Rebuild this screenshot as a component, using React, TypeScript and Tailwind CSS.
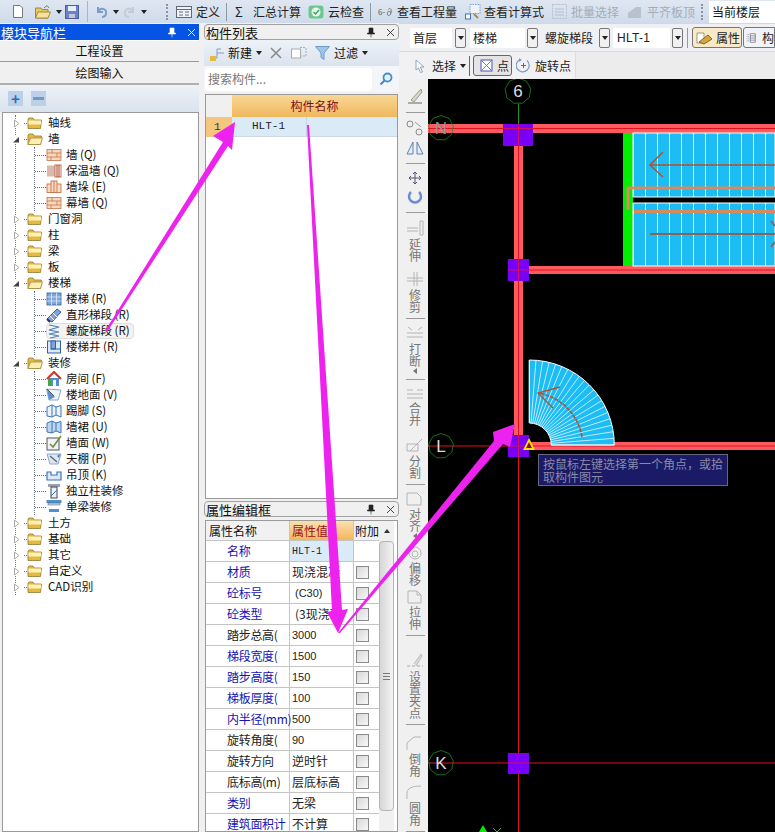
import type { ReactNode } from "react"

const font = { fontFamily: '"Noto Sans CJK SC", "Liberation Sans", sans-serif' }

function Folder({ open }: { open?: boolean }) {
  return (
    <svg width="16" height="14" viewBox="0 0 16 14" className="shrink-0">
      <path d="M1 3 L1 12.5 L13.5 12.5 L14.5 4 L7 4 L6 2 L2 2 Z" fill="#e8b93c" stroke="#8f7a3c" strokeWidth="0.8" />
      {open ? (
        <path d="M1 12.5 L3.5 6 L15.5 6 L13.5 12.5 Z" fill="#fbeeb0" stroke="#a08a40" strokeWidth="0.8" />
      ) : (
        <rect x="1.5" y="4.5" width="12.5" height="4" fill="#fff2b8" />
      )}
    </svg>
  )
}

function Expander({ open }: { open?: boolean }) {
  return (
    <svg width="9" height="9" viewBox="0 0 9 9" className="shrink-0 -ml-[4px] mr-[3px] bg-white">
      {open ? <path d="M1 7.5 L7 7.5 L7 2 Z" fill="#444" /> : <path d="M2.5 1 L7 4.5 L2.5 8 Z" fill="#fff" stroke="#aaa" />}
    </svg>
  )
}

function TreeIcon({ kind }: { kind: string }) {
  const blue = "#3f74b8"
  const brick = "#c9714a"
  return (
    <svg width="16" height="16" viewBox="0 0 16 16" className="shrink-0 relative z-10">
      {kind === "wall" && (
        <g fill="#f5d9bd" stroke={brick} strokeWidth="0.8">
          <rect x="1" y="2.5" width="14" height="11" />
          <path d="M1 6 H15 M1 10 H15 M6 2.5 V6 M11 6 V10 M5 10 V13.5" fill="none" />
        </g>
      )}
      {kind === "insul" && (
        <g>
          <rect x="1" y="2.5" width="8" height="11" fill="#d9b9ad" />
          <rect x="9" y="2" width="6" height="12" fill="#fff" stroke={brick} />
          <path d="M11 2 V14 M13 2 V14" stroke="#a33c20" />
        </g>
      )}
      {kind === "pier" && (
        <g fill="#f7dcc0" stroke={brick} strokeWidth="0.9">
          <rect x="1" y="5" width="14" height="8.5" />
          <rect x="5" y="2" width="6" height="11.5" />
          <path d="M8 2 V13" />
        </g>
      )}
      {kind === "stair" && (
        <g fill="#7ea6dc" stroke="#33609f" strokeWidth="0.8">
          <rect x="1" y="2" width="14" height="12" />
          <path d="M1 6 H15 M1 10 H15 M5.5 2 V14 M10.5 2 V14" fill="none" stroke="#dfeaf7" />
        </g>
      )}
      {kind === "straight" && (
        <g>
          <path d="M1 12 L11 2 L15 5 L6 15 Z" fill="#7ea6dc" stroke="#33609f" />
          <path d="M4 9 L8 13 M7 6 L11 10" stroke="#fff" />
          <path d="M1 12 L4 15" stroke="#334" strokeWidth="2" />
        </g>
      )}
      {kind === "spiral" && <path d="M3 2 L13 4 L3 7 L13 9 L3 11 L13 13 L4 15" fill="none" stroke="#4c7fbe" strokeWidth="1.2" />}
      {kind === "well" && (
        <g fill="#dbe8f7" stroke="#33609f">
          <rect x="1.5" y="2" width="13" height="12" />
          <rect x="5" y="2" width="4.5" height="8" fill="#7ea6dc" />
          <path d="M5 10 H14" />
        </g>
      )}
      {kind === "house" && (
        <g>
          <rect x="3" y="7" width="10" height="8" fill="#4d8fd0" />
          <path d="M1 8 L8 1 L15 8" fill="none" stroke="#d13a2a" strokeWidth="2.2" />
          <rect x="2" y="8" width="3" height="7" fill="#3fa648" />
          <rect x="7" y="9" width="3" height="6" fill="#fff" />
        </g>
      )}
      {kind === "floor" && (
        <g>
          <path d="M0.5 2 L15 3 L12 13 L3 13 Z" fill="#eef3fa" stroke="#8ba6c9" />
          <path d="M1 2 L9 10 L3 13 Z" fill="#5d8fd0" />
          <path d="M1 2 L8 9" stroke="#555" />
        </g>
      )}
      {(kind === "skirt" || kind === "dado") && (
        <g>
          <path d="M1 4 L6 2 L10 4 L15 2.5 V14 L10 12 L6 14 L1 13 Z" fill={kind === "dado" ? "#bcd6f2" : "#eaf2fb"} stroke={blue} />
          <path d="M6 2 V14 M10 4 V12" stroke={blue} />
        </g>
      )}
      {kind === "face" && (
        <g>
          <rect x="1" y="3" width="12" height="12" fill="#eef3fa" stroke="#555" />
          <path d="M4 9 L7 12 L15 1" fill="none" stroke="#7a8a3a" strokeWidth="1.6" />
        </g>
      )}
      {kind === "ceil" && (
        <g>
          <path d="M1 3 L15 3 L12 13 L4 13 Z" fill="#dbe8f7" stroke="#8ba6c9" />
          <path d="M4 5 L11 11" stroke="#666" strokeWidth="1.4" />
          <path d="M11 5 L14 3 L13 7 Z" fill="#3f74b8" />
        </g>
      )}
      {kind === "hang" && <path d="M1 5 H5 V8 H11 V5 H15 V13 H1 Z" fill="#dbe8f7" stroke={blue} strokeWidth="1.2" />}
      {kind === "col" && (
        <g>
          <rect x="2" y="1" width="12" height="3" fill="#9aa3ad" />
          <rect x="5" y="4" width="6" height="11" fill="#e8f0f8" stroke="#445" />
          <path d="M5 13 L11 7" stroke={blue} />
        </g>
      )}
      {kind === "beam" && (
        <g>
          <rect x="0.5" y="1" width="15" height="3" fill="#4d8fd0" />
          <rect x="2" y="4" width="12" height="2" fill="#bcd6f2" stroke="#555" strokeWidth="0.5" />
          <rect x="3" y="10" width="10" height="3" fill="#4d8fd0" />
        </g>
      )}
    </svg>
  )
}

function Root({ label, open, children }: { label: string; open?: boolean; children?: ReactNode }) {
  return (
    <div>
      <div className="flex h-4 items-center">
        <Expander open={open} />
        <span className="w-[3px] border-b border-dotted border-gray-500" />
        <Folder open={open} />
        <span className="ml-[5px] whitespace-nowrap">{label}</span>
      </div>
      {children && <div className="ml-[18px] border-l border-dotted border-gray-500">{children}</div>}
    </div>
  )
}

function Child({ label, kind, active }: { label: string; kind: string; active?: boolean }) {
  return (
    <div className="flex h-4 items-center">
      <span className="w-[11px] border-b border-dotted border-gray-500" />
      <TreeIcon kind={kind} />
      <span
        className={
          active
            ? "-ml-[16px] pl-[19px] pr-[3px] h-4 flex items-center whitespace-nowrap bg-[#f3f3f3] border border-[#dddddd] rounded-sm"
            : "ml-[4px] whitespace-nowrap"
        }
      >
        {label}
      </span>
    </div>
  )
}

function Tree() {
  return (
    <div className="h-full bg-white border border-[#9a9a9a] pt-[2px] pl-[12px] text-[11.5px] text-[#111]">
      <div className="border-l border-dotted border-gray-500 w-[170px]">
        <Root label="轴线" />
        <Root label="墙" open>
          <Child label="墙 (Q)" kind="wall" />
          <Child label="保温墙 (Q)" kind="insul" />
          <Child label="墙垛 (E)" kind="pier" />
          <Child label="幕墙 (Q)" kind="wall" />
        </Root>
        <Root label="门窗洞" />
        <Root label="柱" />
        <Root label="梁" />
        <Root label="板" />
        <Root label="楼梯" open>
          <Child label="楼梯 (R)" kind="stair" />
          <Child label="直形梯段 (R)" kind="straight" />
          <Child label="螺旋梯段 (R)" kind="spiral" active />
          <Child label="楼梯井 (R)" kind="well" />
        </Root>
        <Root label="装修" open>
          <Child label="房间 (F)" kind="house" />
          <Child label="楼地面 (V)" kind="floor" />
          <Child label="踢脚 (S)" kind="skirt" />
          <Child label="墙裙 (U)" kind="dado" />
          <Child label="墙面 (W)" kind="face" />
          <Child label="天棚 (P)" kind="ceil" />
          <Child label="吊顶 (K)" kind="hang" />
          <Child label="独立柱装修" kind="col" />
          <Child label="单梁装修" kind="beam" />
        </Root>
        <Root label="土方" />
        <Root label="基础" />
        <Root label="其它" />
        <Root label="自定义" />
        <Root label="CAD识别" />
      </div>
    </div>
  )
}

function PaneHeader({ title, active }: { title: string; active?: boolean }) {
  return (
    <div
      className={
        active
          ? "h-[16px] flex items-center pl-[1px] pr-[3px] text-[13px] text-white bg-[#0554e3]"
          : "h-[16px] flex items-center pl-[1px] pr-[3px] text-[13px] text-[#111] bg-[#f0f0f0] border border-[#a0a0a0] rounded-sm"
      }
    >
      <span className="flex-1 whitespace-nowrap leading-none">{title}</span>
      <svg width="10" height="11" viewBox="0 0 10 11" className="mr-[10px]">
        <path d="M3 1 H7 V6 H8.5 V7 H1.5 V6 H3 Z M5 7 V10.5" fill={active ? "#fff" : "#222"} stroke={active ? "#fff" : "#222"} strokeWidth="0.6" />
      </svg>
      <svg width="9" height="9" viewBox="0 0 9 9">
        <path d="M1 1 L8 8 M8 1 L1 8" stroke={active ? "#fff" : "#333"} strokeWidth="0.9" />
      </svg>
    </div>
  )
}

const Caret = () => <span className="block border-x-[3px] border-t-[4px] border-x-transparent border-t-[#222]" />

function DropBtn() {
  return (
    <span className="w-[11px] h-[20px] shrink-0 flex items-center justify-center bg-[#f0f0f0] border border-[#777] rounded-[2px]">
      <Caret />
    </span>
  )
}

function TopBar() {
  return (
    <div className="h-[23px] shrink-0 flex items-center bg-gradient-to-b from-[#dfe7f2] to-[#cfdbea] text-[12px] text-[#222] whitespace-nowrap overflow-hidden">
      <svg width="10" height="13" viewBox="0 0 10 13" className="ml-[13px] shrink-0">
        <path d="M0.5 0.5 H7 L9.5 3 V12.5 H0.5 Z" fill="#fff" stroke="#777" />
      </svg>
      <svg width="16" height="14" viewBox="0 0 16 14" className="ml-[12px] shrink-0">
        <path d="M0.5 3 H6 L7 4.5 H13 V13 H0.5 Z" fill="#e7c664" stroke="#a08a40" />
        <path d="M0.5 13 L3 7 H15.5 L13 13 Z" fill="#f6e39a" stroke="#a08a40" />
        <path d="M9 3 L12 0.5 L14 3" fill="none" stroke="#4f9a3c" />
      </svg>
      <span className="ml-[5px]"><Caret /></span>
      <svg width="14" height="14" viewBox="0 0 14 14" className="ml-[3px] shrink-0">
        <rect x="0.5" y="0.5" width="13" height="13" fill="#6b82c4" stroke="#4a5f9f" />
        <rect x="3" y="1" width="8" height="5" fill="#e8eef8" />
        <rect x="4" y="9" width="6" height="4" fill="#c6c6d8" />
      </svg>
      <span className="ml-[8px] w-px h-[21px] bg-[#aab4c4]" />
      <svg width="12" height="12" viewBox="0 0 12 12" className="ml-[8px] shrink-0">
        <path d="M2 1 V6 H7 M2 6 C4 1 11 2 10 8 C9.5 10 8 11 6 11" fill="none" stroke="#7f9cc9" strokeWidth="2" />
      </svg>
      <span className="ml-[5px]"><Caret /></span>
      <svg width="12" height="12" viewBox="0 0 12 12" className="ml-[4px] shrink-0">
        <path d="M10 1 V6 H5 M10 6 C8 1 1 2 2 8 C2.5 10 4 11 6 11" fill="none" stroke="#c4cbd6" strokeWidth="2" />
      </svg>
      <span className="ml-[6px]"><Caret /></span>
      <span className="ml-[19px] w-[2px] h-[16px] border-l-2 border-dotted border-[#8a94a4]" />
      <svg width="16" height="12" viewBox="0 0 16 12" className="ml-[8px] shrink-0">
        <rect x="0.5" y="0.5" width="15" height="11" fill="#eef3fa" stroke="#667" />
        <path d="M0.5 3.5 H15.5 M3 6 H7 M3 9 H7 M9 6 H13 M9 9 H13" stroke="#667" />
      </svg>
      <span className="ml-[4px]">定义</span>
      <span className="ml-[6px] w-px h-[18px] bg-[#8f98a6]" />
      <span className="ml-[8px] w-[8px] text-[13px]">Σ</span>
      <span className="ml-[10px]">汇总计算</span>
      <svg width="16" height="14" viewBox="0 0 16 14" className="ml-[7px] shrink-0">
        <rect x="0.5" y="0.5" width="15" height="13" rx="3" fill="#6cc98c" />
        <circle cx="8" cy="7" r="4.5" fill="#e9f6ee" />
        <path d="M5.5 7 L7.5 9 L11 5" fill="none" stroke="#3d9a62" strokeWidth="1.3" />
      </svg>
      <span className="ml-[4px]">云检查</span>
      <span className="ml-[6px] w-px h-[18px] bg-[#8f98a6]" />
      <span className="ml-[7px] w-[16px] text-[8px] text-[#555] overflow-hidden">6-∂</span>
      <span className="ml-[3px]">查看工程量</span>
      <svg width="16" height="16" viewBox="0 0 16 16" className="ml-[8px] shrink-0">
        <rect x="5" y="0.5" width="10" height="9" fill="#eef3fa" stroke="#7f9cc9" strokeDasharray="1.5 1" />
        <rect x="0.5" y="10" width="5" height="5" fill="#fff" stroke="#3f74b8" />
        <path d="M9 10 L13 14" stroke="#b08a3c" strokeWidth="2" />
      </svg>
      <span className="ml-[3px]">查看计算式</span>
      <svg width="15" height="15" viewBox="0 0 15 15" className="ml-[8px] shrink-0">
        <rect x="0.5" y="0.5" width="14" height="14" fill="none" stroke="#b6bfca" strokeDasharray="2 1" />
        <path d="M3 5 H12 M3 8 H12 M3 11 H12" stroke="#b6bfca" />
      </svg>
      <span className="ml-[4px] text-[#a4acb8]">批量选择</span>
      <svg width="15" height="14" viewBox="0 0 15 14" className="ml-[8px] shrink-0">
        <path d="M1 13 V8 L9 2 H14 V13 Z" fill="#b9c1cc" />
      </svg>
      <span className="ml-[5px] text-[#a4acb8]">平齐板顶</span>
      <span className="ml-[6px] w-[2px] h-[16px] border-l-2 border-dotted border-[#8a94a4]" />
      <span className="ml-[6px] h-[22px] flex-1 bg-white pl-[3px] flex items-center text-[#111]">当前楼层</span>
    </div>
  )
}

function ModulePane() {
  return (
    <div className="w-[199px] shrink-0 flex flex-col">
      <PaneHeader title="模块导航栏" active />
      <div className="h-[22px] flex items-center justify-center text-[12px] bg-[#f0f0f0] border-b border-[#9a9a9a] border-t border-t-white">工程设置</div>
      <div className="h-[23px] flex items-center justify-center text-[12px] bg-[#f0f0f0] border-b-2 border-[#b0b0b0]">绘图输入</div>
      <div className="h-[27px] flex items-center gap-[8px] pl-[8px] bg-gradient-to-b from-[#eef2f8] to-[#d9e2ee]">
        <span className="w-[15px] h-[15px] bg-[#bcd0e8] flex items-center justify-center text-[#2a6fb8] text-[15px] leading-none font-bold">+</span>
        <span className="w-[15px] h-[15px] bg-[#bcd0e8] flex items-center justify-center"><span className="w-[11px] h-[3px] bg-[#6d9ccb]" /></span>
      </div>
      <div className="flex-1 min-h-0 pl-[2px]">
        <Tree />
      </div>
    </div>
  )
}

function ComponentList() {
  return (
    <div className="h-[475px] shrink-0 flex flex-col bg-[#f0f0f0]">
      <PaneHeader title="构件列表" />
      <div className="h-[26px] flex items-center bg-gradient-to-b from-[#eef2f8] to-[#dbe3ee] text-[12px] pl-[5px]">
        <svg width="18" height="18" viewBox="0 0 18 18">
          <path d="M8 9 V5 H12 M8 9 H15 M8 9 V14 H3" fill="none" stroke="#7f9cc9" />
          <rect x="1" y="12" width="6" height="5" fill="#e8b93c" />
        </svg>
        <span className="ml-[1px]">新建</span>
        <span className="ml-[4px]"><Caret /></span>
        <svg width="12" height="12" viewBox="0 0 12 12" className="ml-[8px]">
          <path d="M1 1 L11 11 M11 1 L1 11" stroke="#8a8a8a" strokeWidth="1.6" />
        </svg>
        <svg width="16" height="12" viewBox="0 0 16 12" className="ml-[9px]">
          <rect x="0.5" y="2" width="9" height="9" fill="#fff" stroke="#aaa" />
          <path d="M9 0.5 H15 M15 1 V9 H9" fill="none" stroke="#aaa" strokeDasharray="2 1" />
        </svg>
        <svg width="15" height="14" viewBox="0 0 15 14" className="ml-[8px]">
          <path d="M0.5 0.5 H14.5 L9 7 V13.5 L6 11.5 V7 Z" fill="#9ec5ea" stroke="#6d9ccb" />
        </svg>
        <span className="ml-[4px]">过滤</span>
        <span className="ml-[4px]"><Caret /></span>
      </div>
      <div className="h-[26px] flex items-center bg-[#f3f5f8]">
        <span className="ml-[1px] w-[167px] h-[23px] flex items-center pl-[3px] bg-white text-[12px] text-[#777] rounded-sm">搜索构件...</span>
        <svg width="14" height="14" viewBox="0 0 14 14" className="ml-[7px]">
          <circle cx="8.5" cy="5.5" r="4" fill="#e6f2fb" stroke="#3d8fd0" strokeWidth="1.8" />
          <path d="M5.5 8.5 L1.5 12.5" stroke="#3d8fd0" strokeWidth="2.2" />
        </svg>
      </div>
      <div className="flex-1 min-h-0 mt-[2px] mx-[1px] bg-white border border-[#9a9a9a] text-[12px]">
        <div className="flex h-[22px]">
          <div className="w-[26px] bg-[#f0f0f0]" />
          <div className="flex-1 flex items-center justify-center text-[#7a1020] bg-gradient-to-b from-[#f9d795] to-[#f0b75c]">构件名称</div>
        </div>
        <div className="flex h-[20px]">
          <div className="w-[26px] bg-[#f5c77e] flex items-center pl-[8px] text-[#333] text-[11px]" style={{ fontFamily: '"Liberation Mono", monospace' }}>1</div>
          <div className="flex-1 flex bg-[#dbeaf7] border-b border-[#cfd8e2]">
            <span className="w-[75px] pl-[20px] border-r border-[#c7d5e3] flex items-center text-[11px] text-[#222]" style={{ fontFamily: '"Liberation Mono", monospace' }}>HLT-1</span>
          </div>
        </div>
      </div>
    </div>
  )
}

const props = [
  { name: "名称", value: "HLT-1", blue: true, check: false, cls: "pl-[2px] bg-[#dbeaf7] text-[10px] font-['Liberation_Mono']" },
  { name: "材质", value: "现浇混凝", blue: true, check: true, cls: "pl-[2px] text-[12px]" },
  { name: "砼标号", value: "(C30)", blue: true, check: true, cls: "pl-[5px] text-[11px] font-['Liberation_Sans']" },
  { name: "砼类型", value: "(3现浇砼", blue: true, check: true, cls: "pl-[5px] text-[12px]" },
  { name: "踏步总高(", value: "3000", blue: false, check: true, cls: "pl-[2px] text-[11px] font-['Liberation_Sans']" },
  { name: "梯段宽度(", value: "1500", blue: true, check: true, cls: "pl-[2px] text-[11px] font-['Liberation_Sans']" },
  { name: "踏步高度(", value: "150", blue: true, check: true, cls: "pl-[2px] text-[11px] font-['Liberation_Sans']" },
  { name: "梯板厚度(", value: "100", blue: true, check: true, cls: "pl-[2px] text-[11px] font-['Liberation_Sans']" },
  { name: "内半径(mm)", value: "500", blue: true, check: true, cls: "pl-[2px] text-[11px] font-['Liberation_Sans']" },
  { name: "旋转角度(", value: "90", blue: false, check: true, cls: "pl-[2px] text-[11px] font-['Liberation_Sans']" },
  { name: "旋转方向", value: "逆时针", blue: false, check: true, cls: "pl-[2px] text-[12px]" },
  { name: "底标高(m)", value: "层底标高", blue: false, check: true, cls: "pl-[2px] text-[12px]" },
  { name: "类别", value: "无梁", blue: true, check: true, cls: "pl-[2px] text-[12px]" },
  { name: "建筑面积计", value: "不计算", blue: true, check: true, cls: "pl-[2px] text-[12px]" },
]

function PropertyPane() {
  return (
    <div className="flex-1 min-h-0 flex flex-col bg-[#f0f0f0] mt-[2px]">
      <PaneHeader title="属性编辑框" />
      <div className="flex-1 min-h-0 mt-[3px] mx-[1px] flex bg-white border border-[#9a9a9a] text-[12px] overflow-hidden">
        <div className="flex-1 min-w-0">
          <div className="flex h-[20px] border-b border-[#c4c4c4] bg-[#f1f1f1]">
            <span className="w-[84px] pl-[3px] flex items-center border-r border-[#c4c4c4]">属性名称</span>
            <span className="w-[64px] pl-[2px] flex items-center text-[#9a1020] bg-gradient-to-b from-[#fbe0ae] to-[#f2b65a] border-r border-[#c4c4c4]">属性值</span>
            <span className="flex-1 flex items-center overflow-hidden whitespace-nowrap pl-[1px]">附加</span>
          </div>
          {props.map((p) => (
            <div key={p.name} className="flex h-[21px] border-b border-[#c4c4c4]">
              <span className={p.blue ? "w-[84px] pl-[21px] flex items-center border-r border-[#c4c4c4] text-[#1414b4] whitespace-nowrap tracking-[-0.3px]" : "w-[84px] pl-[21px] flex items-center border-r border-[#c4c4c4] text-[#222] whitespace-nowrap tracking-[-0.3px]"}>{p.name}</span>
              <span className={`w-[64px] flex items-center border-r border-[#c4c4c4] text-[#222] whitespace-nowrap overflow-hidden ${p.cls}`}>{p.value}</span>
              <span className="flex-1 flex items-center pl-[2px]">
                {p.check ? <span className="w-[13px] h-[13px] border border-[#8a8a8a] bg-gradient-to-br from-[#d8d8d8] to-[#f8f8f8]" /> : null}
              </span>
            </div>
          ))}
        </div>
        <div className="w-[15px] mr-[3px] shrink-0 flex flex-col items-center bg-[#f0f0f0]">
          <span className="h-[20px] flex items-center">
            <span className="border-x-[3px] border-b-[4px] border-x-transparent border-b-[#333]" />
          </span>
          <div className="flex-1 w-full bg-gradient-to-r from-[#d6d6d6] to-[#f4f4f4] border border-[#b4b4b4] rounded-sm flex items-center justify-center mb-[20px]">
            <span className="w-[7px] h-[7px] border-y border-[#777] flex items-center"><span className="w-full h-px bg-[#777]" /></span>
          </div>
        </div>
      </div>
    </div>
  )
}

function ToolRows() {
  return (
    <div className="shrink-0 text-[12px] text-[#222] whitespace-nowrap">
      <div className="h-[29px] flex items-center bg-[#eef0f4] border-b border-[#d8d8d8] pl-[11px] border-t border-t-[#d0d8e4]">
        <span className="w-[42px] h-[20px] pl-[3px] flex items-center bg-white">首层</span>
        <span className="ml-[3px]"><DropBtn /></span>
        <span className="ml-[4px] w-[55px] h-[20px] pl-[3px] flex items-center bg-white">楼梯</span>
        <span className="ml-[2px]"><DropBtn /></span>
        <span className="ml-[7px] w-[54px] flex items-center">螺旋梯段</span>
        <DropBtn />
        <span className="ml-[3px] w-[57px] h-[20px] pl-[4px] flex items-center bg-white text-[12px] tracking-wide" style={{ fontFamily: '"Liberation Sans", sans-serif' }}>HLT-1</span>
        <span className="ml-[2px]"><DropBtn /></span>
        <span className="ml-[4px] w-px h-[20px] bg-[#999]" />
        <span className="ml-[4px] w-[50px] h-[21px] flex items-center pl-[3px] gap-[3px] bg-[#f8e9c8] border border-[#777] rounded-[3px]">
          <svg width="17" height="14" viewBox="0 0 17 14">
            <path d="M1 2 H8 V12 H1 Z" fill="#fff" stroke="#997" />
            <path d="M3 11 L12 4 L16 8 L8 13 Z" fill="#d8a43c" stroke="#86642a" />
          </svg>
          属性
        </span>
        <span className="ml-[1px] flex-1 h-[21px] flex items-center pl-[2px] gap-[6px] bg-[#f0f3f8] border border-[#777] rounded-l-[3px] overflow-hidden">
          <svg width="14" height="14" viewBox="0 0 14 14">
            <path d="M6 1 H13 V13 H6 Z M6 4 H13 M6 7 H13 M6 10 H13" fill="#fff" stroke="#667" />
            <path d="M1 2 H4 M1 5 H4 M1 8 H4 M1 11 H4" stroke="#667" strokeDasharray="1 1" />
          </svg>
          构
        </span>
      </div>
      <div className="h-[27px] flex">
        <div className="w-[177px] flex items-center bg-[#f1f1f3] border-r border-[#dddddd] pl-[16px]">
          <svg width="10" height="14" viewBox="0 0 10 14">
            <path d="M1 1 L9 8 L5.5 8 L7.5 13 L5.5 13.5 L3.5 9 L1 11 Z" fill="#fff" stroke="#8ba6c9" />
          </svg>
          <span className="ml-[7px]">选择</span>
          <span className="ml-[4px]"><Caret /></span>
          <span className="ml-[3px] w-px h-[20px] bg-[#666]" />
          <span className="ml-[3px] w-[39px] h-[21px] pl-[6px] flex items-center gap-[4px] bg-[#e4e4e6] border border-[#666] rounded-[3px]">
            <svg width="13" height="13" viewBox="0 0 13 13">
              <rect x="1" y="1" width="11" height="11" fill="#fff" stroke="#4a55a8" />
              <path d="M1 1 L12 12 M12 1 L1 12" stroke="#d0559a" />
            </svg>
            点
          </span>
          <svg width="15" height="15" viewBox="0 0 15 15" className="ml-[4px]">
            <path d="M4 1.5 A6.5 6.5 0 1 0 11 2.5" fill="none" stroke="#7f9cc9" strokeWidth="1.3" />
            <path d="M7.5 5 V10 M5 7.5 H10" stroke="#666" />
            <path d="M3 0 L6 2 L3 4 Z" fill="#7f9cc9" />
          </svg>
          <span className="ml-[4px]">旋转点</span>
        </div>
        <div className="flex-1 bg-[#ececec]" />
      </div>
    </div>
  )
}

function V({ text }: { text: string }) {
  return <span className="w-[13px] text-[12px] leading-[12px] text-[#777] text-center shrink-0">{text}</span>
}

const Sep = () => <span className="w-[19px] h-px bg-[#999] my-[5px] shrink-0" />

function GhostIcon({ h = 15, children }: { h?: number; children: ReactNode }) {
  return (
    <svg width="18" height={h} viewBox={`0 0 18 ${h}`} className="shrink-0 my-[2px]">
      {children}
    </svg>
  )
}

function SideTools() {
  const line = { fill: "none", stroke: "#b4b4b4" }
  return (
    <div className="w-[26px] shrink-0 ml-[3px] flex flex-col items-center bg-[#f0f0f0] pt-[6px] overflow-hidden">
      <GhostIcon h={18}>
        <path d="M2 16 H16" stroke="#666" />
        <path d="M5 13 L15 2 L16 5 L8 15 Z" fill="#d8d8c0" stroke="#999" />
      </GhostIcon>
      <Sep />
      <GhostIcon h={16}>
        <circle cx="4" cy="4" r="3" {...line} stroke="#888" />
        <circle cx="13" cy="12" r="3" {...line} stroke="#888" />
        <path d="M9 2 L15 7" stroke="#999" />
      </GhostIcon>
      <GhostIcon h={16}>
        <path d="M7 2 V14 H1 Z M11 2 V14 H17 Z" fill="#e8edf5" stroke="#5f7fae" />
      </GhostIcon>
      <Sep />
      <GhostIcon h={14}>
        <path d="M9 1 V13 M3 7 H15 M9 1 L7 3 M9 1 L11 3 M9 13 L7 11 M9 13 L11 11 M3 7 L5 5 M3 7 L5 9 M15 7 L13 5 M15 7 L13 9" stroke="#557" fill="none" />
      </GhostIcon>
      <GhostIcon h={16}>
        <path d="M5 3 A6 6 0 1 0 13 3" fill="none" stroke="#6c8bd0" strokeWidth="2.5" />
      </GhostIcon>
      <Sep />
      <GhostIcon h={16}>
        <path d="M1 8 H12 M1 11 H12 M14 1 H17 V15 H14 Z" {...line} />
      </GhostIcon>
      <V text="延伸" />
      <span className="h-[7px] shrink-0" />
      <GhostIcon h={16}>
        <path d="M1 7 H17 M1 10 H17 M8 1 V15 M11 1 V15" {...line} />
      </GhostIcon>
      <V text="修剪" />
      <Sep />
      <GhostIcon h={13}>
        <path d="M2 1 L6 4 M16 1 L12 4 M1 7 H17 M1 11 H17" {...line} />
      </GhostIcon>
      <span className="h-[2px] shrink-0" />
      <V text="打断" />
      <span className="mt-[1px] border-y-[3px] border-r-[4px] border-y-transparent border-r-[#777]" />
      <Sep />
      <GhostIcon h={13}>
        <path d="M1 3 H7 M17 3 H11 M1 7 H17 M1 11 H17" {...line} />
      </GhostIcon>
      <V text="合并" />
      <span className="h-[9px] shrink-0" />
      <GhostIcon h={16}>
        <path d="M1 7 H12 V14 H1 Z M4 14 L16 2" {...line} />
      </GhostIcon>
      <V text="分割" />
      <Sep />
      <GhostIcon h={14}>
        <path d="M1 1 H11 L15 5 V13 H1 Z" {...line} />
      </GhostIcon>
      <V text="对齐" />
      <span className="mt-[1px] mb-[5px] border-y-[3px] border-r-[4px] border-y-transparent border-r-[#777]" />
      <GhostIcon h={14}>
        <circle cx="9" cy="7" r="6" {...line} />
        <circle cx="9" cy="8" r="3" {...line} />
      </GhostIcon>
      <V text="偏移" />
      <span className="h-[2px] shrink-0" />
      <GhostIcon h={14}>
        <path d="M2 1 H11 L15 5 V13 H2 Z M11 1 V5 H15" {...line} />
      </GhostIcon>
      <V text="拉伸" />
      <Sep />
      <span className="h-[9px] shrink-0" />
      <GhostIcon h={17}>
        <path d="M8 12 L15 2 L16 4 L10 14" fill="#ddd" stroke="#bbb" />
        <path d="M1 14 H17" stroke="#aaa" strokeDasharray="3 2" />
      </GhostIcon>
      <V text="设置夹点" />
      <Sep />
      <span className="h-[3px] shrink-0" />
      <GhostIcon h={16}>
        <path d="M1 15 V8 L8 2 H15" {...line} />
      </GhostIcon>
      <V text="倒角" />
      <span className="h-[5px] shrink-0" />
      <GhostIcon h={16}>
        <path d="M1 15 V9 C1 5 5 2 15 2" {...line} />
      </GhostIcon>
      <V text="圆角" />
      <Sep />
    </div>
  )
}

function AxisBubble({ x, y, label, r = 12.5, color = "#dddddd" }: { x: number; y: number; label: string; r?: number; color?: string }) {
  const pts = Array.from({ length: 9 }, (_, i) => {
    const a = (i * 2 * Math.PI) / 9 - Math.PI / 2
    return `${x + r * Math.cos(a)},${y + r * Math.sin(a)}`
  }).join(" ")
  return (
    <g>
      <polygon points={pts} fill="none" stroke="#1f8a1f" strokeWidth="0.8" />
      <text x={x} y={y + 6} fill={color} fontSize="17" textAnchor="middle" fontFamily="Liberation Sans, sans-serif">
        {label}
      </text>
    </g>
  )
}

function Fan() {
  const cx = 529.3
  const cy = 445
  const R = 85
  const r = 22
  const n = 20
  const lines = Array.from({ length: n + 1 }, (_, i) => {
    const a = (i / n) * (Math.PI / 2)
    return { x1: cx + r * Math.sin(a), y1: cy - r * Math.cos(a), x2: cx + R * Math.sin(a), y2: cy - R * Math.cos(a) }
  })
  return (
    <g>
      <path d={`M${cx} ${cy - R} A${R} ${R} 0 0 1 ${cx + R} ${cy} L${cx + r} ${cy} A${r} ${r} 0 0 0 ${cx} ${cy - r} Z`} fill="#1cbcf5" stroke="#fff" strokeWidth="1" />
      {lines.map((l, i) => (
        <line key={i} {...l} stroke="#e8f8ff" strokeWidth="0.8" />
      ))}
      <path d="M582 437 A53 53 0 0 0 538 393" fill="none" stroke="#b5502c" strokeWidth="1.6" strokeDasharray="4 1" />
      <path d="M560 387 L538 393 L553 408" fill="none" stroke="#b5502c" strokeWidth="1.3" />
    </g>
  )
}

function Canvas() {
  const treads = [633, 645, 657, 669, 681, 693, 705, 717, 729, 741, 753, 765]
  return (
    <svg viewBox="428 79 347 753" className="flex-1 min-w-0 h-full bg-black block">
      <rect x="428" y="124" width="347" height="9" fill="#ff5a60" />
      <rect x="514" y="133" width="9" height="302" fill="#ff5a60" />
      <rect x="529" y="266" width="246" height="8" fill="#ff5a60" />
      <rect x="529" y="442" width="246" height="8" fill="#ff5a60" />
      <line x1="428" y1="128.5" x2="775" y2="128.5" stroke="#e0101c" />
      <line x1="529" y1="270" x2="775" y2="270" stroke="#e0101c" />
      <line x1="428" y1="446" x2="775" y2="446" stroke="#e0101c" />
      <line x1="428" y1="763" x2="775" y2="763" stroke="#e0101c" />
      <line x1="518.5" y1="104" x2="518.5" y2="124" stroke="#1f9a1f" />
      <line x1="518.5" y1="124" x2="518.5" y2="832" stroke="#e0101c" />

      <rect x="623" y="133" width="10" height="133" fill="#00ee00" />
      <rect x="633" y="133" width="142" height="64" fill="#1cbcf5" stroke="#fff" />
      <rect x="633" y="203" width="142" height="63" fill="#1cbcf5" stroke="#fff" />
      {treads.map((x) => (
        <g key={x}>
          <line x1={x + 0.5} y1="133" x2={x + 0.5} y2="197" stroke="#fff" />
          <line x1={x + 0.5} y1="203" x2={x + 0.5} y2="266" stroke="#fff" />
        </g>
      ))}
      <path d="M650 165 H775 M663 152 L650 165 L663 177" fill="none" stroke="#b5502c" strokeWidth="1.5" />
      <path d="M628 210 V188 H775 M634 211.5 H775" fill="none" stroke="#d98a5c" strokeWidth="3" />
      <path d="M650 234 H775 M771 221 L775 226 M771 247 L775 242" fill="none" stroke="#8c6258" strokeWidth="2" />

      <Fan />

      <rect x="503" y="124" width="30" height="22" fill="#7a00f5" />
      <rect x="508" y="259" width="21" height="22" fill="#7a00f5" />
      <rect x="508" y="435" width="21" height="22" fill="#7a00f5" />
      <rect x="508" y="753" width="21" height="21" fill="#7a00f5" />
      <line x1="503" y1="128.5" x2="533" y2="128.5" stroke="#d0105c" />
      <line x1="518.5" y1="124" x2="518.5" y2="146" stroke="#d0105c" />
      <line x1="508" y1="270" x2="529" y2="270" stroke="#d0105c" />
      <line x1="518.5" y1="259" x2="518.5" y2="281" stroke="#d0105c" />
      <line x1="508" y1="446" x2="529" y2="446" stroke="#d0105c" />
      <line x1="518.5" y1="435" x2="518.5" y2="457" stroke="#d0105c" />
      <line x1="508" y1="763" x2="529" y2="763" stroke="#d0105c" />
      <path d="M529 440 L533.5 449 L524.5 449 Z" fill="#7a1040" stroke="#ffe000" strokeWidth="1.8" />

      <AxisBubble x={518} y={91} label="6" r={13} />
      <AxisBubble x={441} y={128} label="N" color="#7f9a90" />
      <AxisBubble x={441} y={446} label="L" />
      <AxisBubble x={441} y={763} label="K" />

      <path d="M483 825 L487 832 H479 Z" fill="#00ee00" />
      <path d="M493 828 L497 832 L501 828" fill="none" stroke="#5aa05a" />
    </svg>
  )
}

function Arrows() {
  return (
    <svg width="775" height="832" viewBox="0 0 775 832" className="absolute inset-0 pointer-events-none">
      <g fill="#ee22ee">
        <path d="M105 331 L223 142 L213 136 L235 122 L232 150 L228 146 L107 332 Z" />
        <path d="M307 125 L309 125 L342 610 L348 609 L338 633 L327 612 L332 611 Z" />
        <path d="M338 633 L494 441 L493 432 L515 424 L510 447 L503 444 L340 633 Z" />
      </g>
    </svg>
  )
}

export default function App() {
  return (
    <div className="relative w-[775px] h-[832px] overflow-hidden flex flex-col bg-[#f0f0f0] text-[#111]" style={font}>
      <TopBar />
      <div className="flex-1 min-h-0 flex pt-[1px]">
        <ModulePane />
        <div className="w-[195px] ml-[5px] shrink-0 flex flex-col">
          <ComponentList />
          <PropertyPane />
        </div>
        <div className="flex-1 min-w-0 flex flex-col -mt-[1px]">
          <ToolRows />
          <div className="flex-1 min-h-0 flex">
            <SideTools />
            <Canvas />
          </div>
        </div>
      </div>
      <Arrows />
      <div className="absolute left-[538px] top-[454px] w-[190px] h-[32px] px-[4px] bg-[#1a1a66] border border-[#666680] text-[12px] leading-[13px] pt-[2px] text-[#8a8aa8]">
        按鼠标左键选择第一个角点，或拾取构件图元
      </div>
    </div>
  )
}
